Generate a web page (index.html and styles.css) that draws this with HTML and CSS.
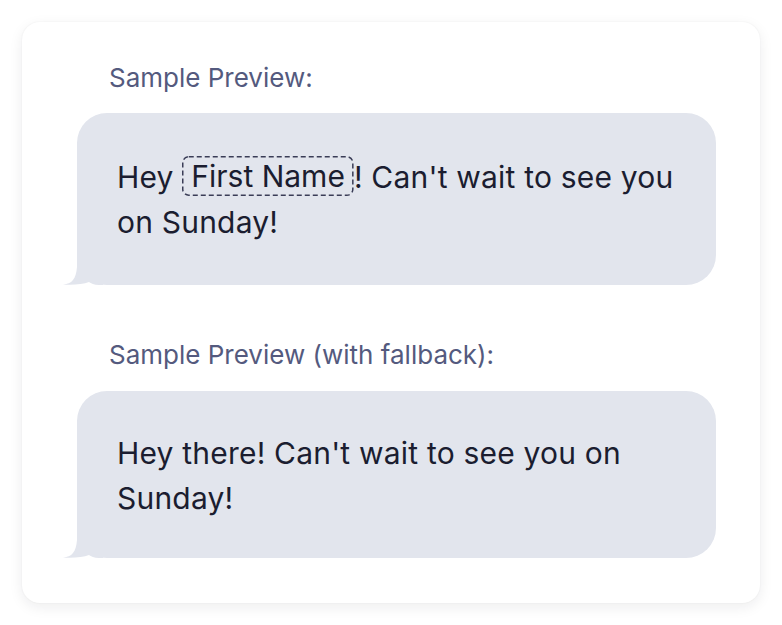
FILE: index.html
```html
<!DOCTYPE html>
<html>
<head>
<meta charset="utf-8">
<link rel="stylesheet" href="styles.css">
</head>
<body>
<div class="card">
  <div class="label">Sample Preview:</div>
  <div class="bubble first">
    <p class="msg">Hey <span class="chip">First Name<svg class="dash" aria-hidden="true"><rect class="dash-rect" x="0.75" y="0.75" rx="6" ry="6"/></svg></span>! Can't wait to see you on Sunday!</p>
    <svg class="tail" width="40" height="30" viewBox="0 0 40 30"><path d="M0,29.5 C9,29 13,24 14,12 L14,0 L40,0 L40,30 L36,30 C31,30 28,28.5 26,27 C20,29.5 10,30 0,29.5 Z"/></svg>
  </div>
  <div class="label second">Sample Preview (with fallback):</div>
  <div class="bubble">
    <p class="msg">Hey there! Can't wait to see you on Sunday!</p>
    <svg class="tail" width="40" height="30" viewBox="0 0 40 30"><path d="M0,29.5 C9,29 13,24 14,12 L14,0 L40,0 L40,30 L36,30 C31,30 28,28.5 26,27 C20,29.5 10,30 0,29.5 Z"/></svg>
  </div>
</div>
</body>
</html>
```
FILE: styles.css
```css
html, body {
  margin: 0;
  background: #ffffff;
}
body {
  padding: 22px;
  font-family: "Inter", "Liberation Sans", sans-serif;
}
.card {
  background: #fff;
  border-radius: 18px;
  box-shadow: 0 4px 14px rgba(20, 24, 40, 0.08), 0 0 2px rgba(20, 24, 40, 0.06);
  padding: 41px 44px 45px 55px;
  display: flex;
  flex-direction: column;
}
.label {
  font-size: 26px;
  line-height: 30px;
  color: #545a7e;
  padding-left: 32px;
  margin-bottom: 20px;
}
.label.second {
  margin-top: 55px;
  margin-bottom: 21px;
}
.bubble {
  position: relative;
  background: #e2e5ed;
  border-radius: 30px;
  padding: 40px 28px 37px 40px;
}
.bubble.first {
  padding: 42px 28px 40px 40px;
}
.msg {
  margin: 0;
  font-size: 30px;
  line-height: 45px;
  color: #1b1d30;
  letter-spacing: 0.2px;
}
.chip {
  position: relative;
  display: inline-block;
  padding: 0 9px;
  line-height: 40px;
  vertical-align: 1px;
  letter-spacing: 0;
}
.dash {
  position: absolute;
  left: 0;
  top: 0;
  width: 100%;
  height: 100%;
  overflow: visible;
  pointer-events: none;
}
.dash-rect {
  width: calc(100% - 1.5px);
  height: calc(100% - 1.5px);
  fill: none;
  stroke: #3a3d57;
  stroke-width: 1.5;
  stroke-dasharray: 5 3;
}
.tail {
  position: absolute;
  left: -14px;
  bottom: 0;
  fill: #e2e5ed;
}
```
